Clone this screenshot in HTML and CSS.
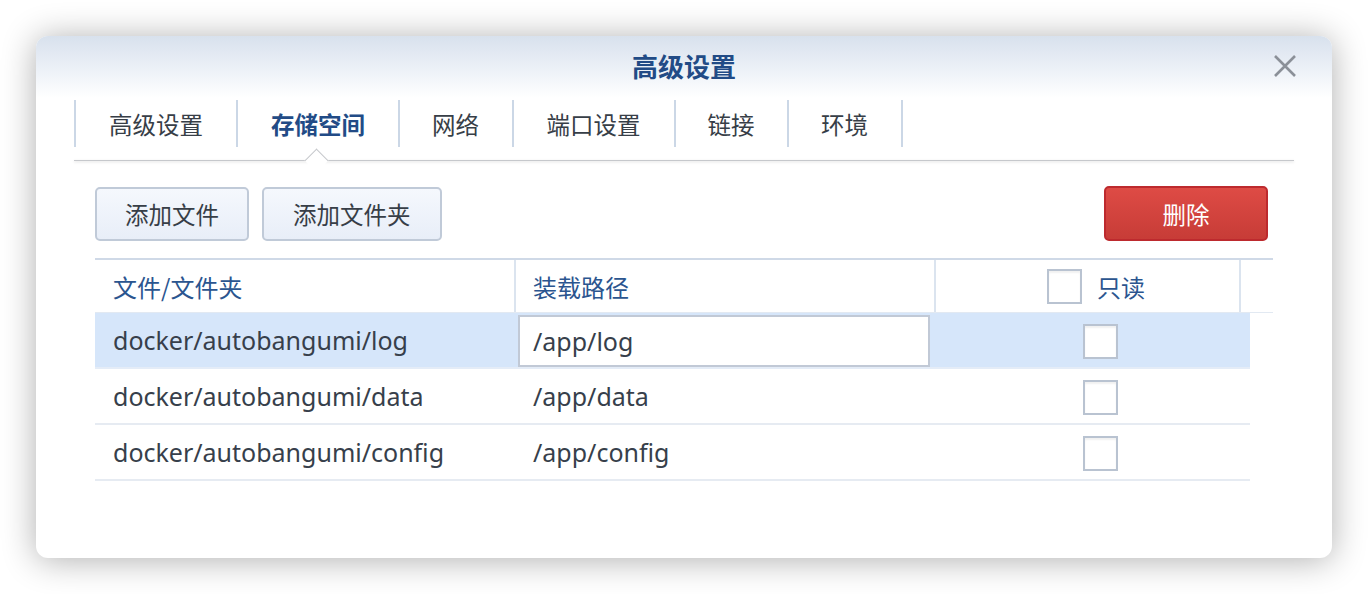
FILE: index.html
```html
<!DOCTYPE html>
<html lang="zh-CN">
<head>
<meta charset="utf-8">
<title>高级设置</title>
<link rel="stylesheet" href="styles.css">
</head>
<body>
<div class="page">
  <div class="dialog">
    <div class="header">
      <div class="title">高级设置</div>
      <div class="close" aria-label="关闭">
        <svg width="24" height="24" viewBox="0 0 24 24"><path d="M2 2 L22 22 M22 2 L2 22" stroke="#8b9098" stroke-width="2.6" fill="none"/></svg>
      </div>
    </div>
    <div class="tabbar">
      <div class="tabs">
        <div class="tab">高级设置</div>
        <div class="tab active">存储空间</div>
        <div class="tab short">网络</div>
        <div class="tab">端口设置</div>
        <div class="tab short">链接</div>
        <div class="tab short last">环境</div>
      </div>
      <div class="tabline"><span class="notch"></span></div>
    </div>
    <div class="content">
      <div class="toolbar">
        <div class="btn-group">
          <button class="btn">添加文件</button>
          <button class="btn wide">添加文件夹</button>
        </div>
        <button class="btn btn-danger">删除</button>
      </div>
      <div class="grid">
        <div class="grid-head">
          <div class="hcell c1">文件/文件夹</div>
          <div class="hcell c2">装载路径</div>
          <div class="hcell c3"><span class="checkbox"></span><span class="hlabel">只读</span></div>
          <div class="hcell c4"></div>
        </div>
        <div class="row selected">
          <div class="cell r1">docker/autobangumi/log</div>
          <div class="cell r2 editing"><div class="input">/app/log</div></div>
          <div class="cell r3"><span class="checkbox"></span></div>
        </div>
        <div class="row">
          <div class="cell r1">docker/autobangumi/data</div>
          <div class="cell r2">/app/data</div>
          <div class="cell r3"><span class="checkbox"></span></div>
        </div>
        <div class="row">
          <div class="cell r1">docker/autobangumi/config</div>
          <div class="cell r2">/app/config</div>
          <div class="cell r3"><span class="checkbox"></span></div>
        </div>
      </div>
    </div>
  </div>
</div>
</body>
</html>
```

FILE: styles.css
```css
* { box-sizing: border-box; }
html, body { margin: 0; padding: 0; background: #ffffff; }
body {
  font-family: "Noto Sans", "Noto Sans CJK SC", sans-serif;
  color: #373f4b;
}
.page {
  width: 1368px;
  height: 594px;
  padding: 36px;
}
.dialog {
  width: 1296px;
  height: 522px;
  border-radius: 12px;
  background: #ffffff;
  box-shadow: 0 2px 34px rgba(0, 0, 0, 0.32);
  overflow: hidden;
}
.header {
  position: relative;
  height: 64px;
  padding-bottom: 4px;
  background: linear-gradient(#d8e1ed 0, #eef2f8 36px, #ffffff 62px);
  display: flex;
  align-items: center;
  justify-content: center;
}
.title {
  font-family: "Noto Sans CJK SC", sans-serif;
  font-weight: 700;
  font-size: 26px;
  color: #224b86;
  line-height: 1;
}
.close {
  position: absolute;
  right: 35px;
  top: 18px;
  width: 24px;
  height: 24px;
}
.close svg { display: block; }
.tabbar {
  margin: 0 38px;
}
.tabs {
  display: flex;
  height: 47px;
}
.tab {
  display: flex;
  align-items: center;
  padding: 0 33px;
  border-left: 2px solid #cbd7e6;
  font-family: "Noto Sans CJK SC", sans-serif;
  font-size: 23.5px;
  color: #373e47;
}
.tab.short { padding: 0 32.5px 0 32px; }
.tab.last { border-right: 2px solid #cbd7e6; }
.tab.active { color: #224b86; font-weight: 700; }
.tabline {
  position: relative;
  margin-top: 13px;
  height: 1px;
  background: #c6c8cc;
  box-shadow: 0 1px 3px rgba(0, 0, 0, 0.18);
}
.notch {
  position: absolute;
  left: 234px;
  top: -8px;
  width: 17px;
  height: 17px;
  background: #ffffff;
  border-left: 1px solid #c6c8cc;
  border-top: 1px solid #c6c8cc;
  transform: rotate(45deg);
}
.content {
  padding: 26px 59px 0 59px;
}
.toolbar {
  display: flex;
  justify-content: space-between;
  align-items: flex-start;
}
.btn-group { display: flex; gap: 13px; }
.btn {
  height: 54px;
  padding: 0 28px;
  border: 2px solid #c0cad8;
  border-radius: 5px;
  background: linear-gradient(#f5f8fd, #e8eef8);
  font-family: "Noto Sans CJK SC", sans-serif;
  font-size: 23.5px;
  color: #373e47;
  display: flex;
  align-items: center;
}
.btn.wide { padding: 0 29px; }
.btn-danger {
  width: 164px;
  height: 55px;
  margin-top: -1px;
  margin-right: 5px;
  justify-content: center;
  border: 2px solid #bd2a2e;
  background: linear-gradient(#de4b45, #c73c37);
  color: #ffffff;
}
.grid {
  margin-top: 17px;
}
.grid-head {
  display: flex;
  height: 55px;
  border-top: 2px solid #cfd9e7;
  border-bottom: 1px solid #e2e9f2;
}
.hcell {
  display: flex;
  align-items: center;
  font-family: "Noto Sans CJK SC", sans-serif;
  font-size: 24px;
  color: #2b558f;
  border-right: 2px solid #dbe4ef;
}
.hcell.c1 { width: 421px; padding-left: 18px; }
.hcell.c2 { width: 420px; padding-left: 17px; }
.hcell.c3 { width: 305px; padding-left: 111px; }
.hcell.c4 { width: 32px; border-right: none; }
.hlabel { margin-left: 15px; }
.row {
  display: flex;
  width: 1155px;
  height: 56px;
  border-bottom: 2px solid #e6ebf2;
}
.row.selected { background: #d6e6fa; border-bottom-color: #e4ecf7; }
.cell {
  display: flex;
  align-items: center;
  font-size: 25px;
  color: #373f4b;
}
.cell.r1 { width: 420px; padding-left: 18px; }
.cell.r2 { width: 420px; padding-left: 18px; }
.cell.r3 { width: 315px; padding-left: 148px; }
.cell.r2.editing { padding-left: 3px; align-items: flex-start; }
.input {
  margin-top: 2px;
  width: 412px;
  height: 52px;
  border: 2px solid #c1c9d6;
  background: #ffffff;
  padding-left: 13px;
  display: flex;
  align-items: center;
}
.checkbox {
  display: inline-block;
  width: 35px;
  height: 35px;
  border: 2px solid #b9c3d1;
  background: #ffffff;
  box-shadow: inset 0 2px 2px rgba(0, 0, 0, 0.06);
  flex: none;
}
.cell.r3 .checkbox { margin-top: 2px; }
```
